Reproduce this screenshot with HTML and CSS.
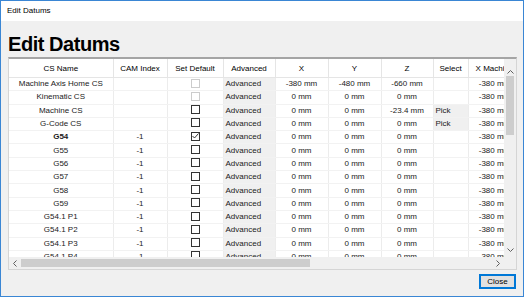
FILE: index.html
```html
<!DOCTYPE html>
<html lang="en">
<head>
    <meta charset="UTF-8">
    <title>Edit Datums</title>
    <link rel="stylesheet" href="styles.css">
</head>
<body>

    <div class="window">
        <div class="titlebar">Edit Datums</div>

        <div class="content">
            <h1>Edit Datums</h1>

            <div class="frame">
                <div class="gridArea">
                    <div class="gridView">
                        <table class="datums">
                            <colgroup>
                                <col style="width:104px">
                                <col style="width:54px">
                                <col style="width:56px">
                                <col style="width:52px">
                                <col style="width:53px">
                                <col style="width:53px">
                                <col style="width:52px">
                                <col style="width:35px">
                                <col style="width:53px">
                            </colgroup>
                            <thead>
                                <tr>
                                    <th>CS Name</th>
                                    <th>CAM Index</th>
                                    <th>Set Default</th>
                                    <th>Advanced</th>
                                    <th>X</th>
                                    <th>Y</th>
                                    <th>Z</th>
                                    <th>Select</th>
                                    <th>X Machine</th>
                                </tr>
                            </thead>
                            <tbody id="rows"></tbody>
                        </table>
                    </div>
                    <div class="vscroll">
                        <div class="arrowBox">
                            <svg width="7" height="4" viewBox="0 0 7 4"><polyline points="0.5,3.5 3.5,0.5 6.5,3.5" fill="none" stroke="#606060" stroke-width="1"/></svg>
                        </div>
                        <div class="vthumb"></div>
                        <div class="vtrack"></div>
                        <div class="arrowBox">
                            <svg width="7" height="4" viewBox="0 0 7 4"><polyline points="0.5,0.5 3.5,3.5 6.5,0.5" fill="none" stroke="#606060" stroke-width="1"/></svg>
                        </div>
                    </div>
                </div>
                <div class="hscrollRow">
                    <div class="hscroll">
                        <div class="arrowBoxH">
                            <svg width="4" height="7" viewBox="0 0 4 7"><polyline points="3.5,0.5 0.5,3.5 3.5,6.5" fill="none" stroke="#606060" stroke-width="1"/></svg>
                        </div>
                        <div class="hthumb"></div>
                        <div class="htrack"></div>
                        <div class="arrowBoxH">
                            <svg width="4" height="7" viewBox="0 0 4 7"><polyline points="0.5,0.5 3.5,3.5 0.5,6.5" fill="none" stroke="#606060" stroke-width="1"/></svg>
                        </div>
                    </div>
                    <div class="corner"></div>
                </div>
            </div>

            <div class="footer">
                <button class="closeButton">Close</button>
            </div>
        </div>
    </div>

    <script>
        // name, cam index, checkbox state, x, y, z, pick, x machine
        const datums = [
            ['Machine Axis Home CS', '', 'disabled', '-380 mm', '-480 mm', '-660 mm', false],
            ['Kinematic CS', '', 'disabled', '0 mm', '0 mm', '0 mm', false],
            ['Machine CS', '', 'off', '0 mm', '0 mm', '-23.4 mm', true],
            ['G-Code CS', '', 'off', '0 mm', '0 mm', '0 mm', true],
            ['G54', '-1', 'on', '0 mm', '0 mm', '0 mm', false],
            ['G55', '-1', 'off', '0 mm', '0 mm', '0 mm', false],
            ['G56', '-1', 'off', '0 mm', '0 mm', '0 mm', false],
            ['G57', '-1', 'off', '0 mm', '0 mm', '0 mm', false],
            ['G58', '-1', 'off', '0 mm', '0 mm', '0 mm', false],
            ['G59', '-1', 'off', '0 mm', '0 mm', '0 mm', false],
            ['G54.1 P1', '-1', 'off', '0 mm', '0 mm', '0 mm', false],
            ['G54.1 P2', '-1', 'off', '0 mm', '0 mm', '0 mm', false],
            ['G54.1 P3', '-1', 'off', '0 mm', '0 mm', '0 mm', false],
            ['G54.1 P4', '-1', 'off', '0 mm', '0 mm', '0 mm', false]
        ];

        const check = '<svg width="7" height="6" viewBox="0 0 7 6"><polyline points="0.5,3 2.5,5 6.5,0.5" fill="none" stroke="#333" stroke-width="1"/></svg>';

        const tbody = document.getElementById('rows');
        datums.forEach(d => {
            const tr = document.createElement('tr');
            if (d[2] === 'on') tr.className = 'current';
            tr.innerHTML = `
                <td class="name">${d[0]}</td>
                <td>${d[1]}</td>
                <td><span class="checkBox ${d[2]}">${d[2] === 'on' ? check : ''}</span></td>
                <td class="button">Advanced</td>
                <td>${d[3]}</td>
                <td>${d[4]}</td>
                <td>${d[5]}</td>
                <td class="${d[6] ? 'button' : ''}">${d[6] ? 'Pick' : ''}</td>
                <td>-380 mm</td>`;
            tbody.appendChild(tr);
        });
    </script>

</body>
</html>
```

FILE: styles.css
```css
body {
    margin: 0;
    padding: 0;
    background-color: #fff;
    font-family: 'Liberation Sans', Arial, sans-serif;
    font-size: 8px;
    color: #000;
}

.window {
    width: 524px;
    height: 297px;
    box-sizing: border-box;
    border: 1px solid #3a86d4;
    background-color: #f0f0f0;
    display: flex;
    flex-direction: column;
}

.titlebar {
    height: 20px;
    line-height: 20px;
    padding-left: 6px;
    background-color: #fff;
    color: #000;
}

.content {
    padding: 0 6px 0 7px;
    flex: 1;
}

h1 {
    margin: 11px 0 1px 0;
    font-size: 20px;
    line-height: 24px;
    font-weight: bold;
    letter-spacing: -0.45px;
    color: #000;
}

.frame {
    height: 213px;
    box-sizing: border-box;
    border: 1px solid #d5d5d5;
    border-top: 2px solid #a5a5a5;
    background-color: #fff;
    display: flex;
    flex-direction: column;
}

.gridArea {
    height: 198px;
    display: flex;
}

.gridView {
    width: 495px;
    overflow: hidden;
}

.datums {
    border-collapse: collapse;
    table-layout: fixed;
    width: 512px;
}

.datums th {
    height: 18px;
    padding: 0;
    font-weight: normal;
    text-align: center;
    white-space: nowrap;
    overflow: hidden;
    border-right: 1px solid #e5e5e5;
    border-bottom: 1px solid #e5e5e5;
    background-color: #fff;
}

.datums td {
    height: 13.3px;
    line-height: 12px;
    padding: 0;
    text-align: center;
    white-space: nowrap;
    overflow: hidden;
    border-right: 1px solid #ececec;
    border-bottom: 1px solid #f2f2f2;
    color: #1a1a1a;
    box-sizing: border-box;
}

.datums td.button {
    background-color: #f0f0f0;
    text-align: left;
    padding-left: 2px;
}

.datums tr.current td.name {
    font-weight: bold;
}

.checkBox {
    display: inline-block;
    width: 9px;
    height: 9px;
    box-sizing: border-box;
    border: 1px solid #333;
    background-color: #fff;
    vertical-align: middle;
    position: relative;
    top: -1px;
}

.checkBox.disabled {
    border-color: #cccccc;
}

.checkBox svg {
    display: block;
    margin: 0.5px 0 0 0.5px;
}

.vscroll {
    width: 12px;
    background-color: #f0f0f0;
    display: flex;
    flex-direction: column;
}

.arrowBox {
    height: 15px;
    display: flex;
    justify-content: center;
    align-items: center;
}

.arrowBox:first-child {
    height: 17px;
    align-items: flex-end;
    padding-bottom: 2px;
    box-sizing: border-box;
}

.vthumb {
    height: 59px;
    margin: 0 2px;
    background-color: #cdcdcd;
}

.vtrack {
    flex: 1;
}

.hscrollRow {
    height: 12px;
    display: flex;
}

.hscroll {
    width: 495px;
    display: flex;
    background-color: #f0f0f0;
}

.arrowBoxH {
    width: 12px;
    display: flex;
    justify-content: center;
    align-items: center;
}

.hthumb {
    width: 289px;
    margin: 2px 0;
    background-color: #cdcdcd;
}

.htrack {
    flex: 1;
}

.corner {
    flex: 1;
    background-color: #f0f0f0;
}

.footer {
    display: flex;
    justify-content: flex-end;
    padding-top: 4px;
}

.closeButton {
    width: 37px;
    height: 15px;
    margin-right: 1px;
    padding: 0;
    font-family: 'Liberation Sans', Arial, sans-serif;
    font-size: 8px;
    color: #000;
    background-color: #e1e1e1;
    border: 1px solid #0078d7;
    box-shadow: inset 0 0 0 1px #0078d7;
}
```
